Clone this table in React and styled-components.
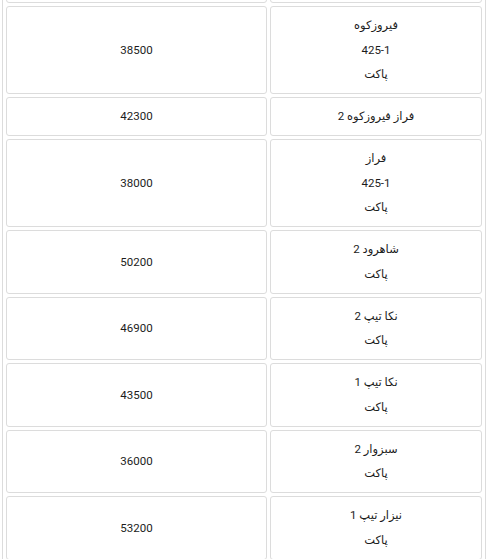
import React from "react";
import styled, { createGlobalStyle } from "styled-components";

const GlobalStyle = createGlobalStyle`
  html, body {
    margin: 0;
    padding: 0;
    background: #fff;
  }
  body {
    width: 487px;
    height: 559px;
    overflow: hidden;
    font-family: Roboto, "DejaVu Sans", sans-serif;
  }
`;

const Page = styled.div`
  padding-left: 2px;
`;

const PriceTable = styled.table`
  width: 484px;
  margin-top: -40px;
  table-layout: fixed;
  border-collapse: separate;
  border-spacing: 3px;
  border: 1px solid #dcdcdc;
  direction: rtl;
`;

const Cell = styled.td`
  box-sizing: border-box;
  width: ${({ $wide }) => ($wide ? "261px" : "212px")};
  height: ${({ $h }) => ($h ? `${$h}px` : "auto")};
  padding: 6.25px 6px;
  border: 1px solid #dcdcdc;
  border-radius: 3px;
  text-align: center;
  vertical-align: middle;
  font-size: 11.5px;
  line-height: 24.5px;
  color: #1c1c1c;
`;

const Line = styled.div`
  white-space: nowrap;
`;

const rows = [
  { name: ["فیروزکوه", "425-1", "پاکت"], price: "38500" },
  { name: ["فراز فیروزکوه 2"], price: "42300" },
  { name: ["فراز", "425-1", "پاکت"], price: "38000" },
  { name: ["شاهرود 2", "پاکت"], price: "50200" },
  { name: ["نکا تیپ 2", "پاکت"], price: "46900" },
  { name: ["نکا تیپ 1", "پاکت"], price: "43500" },
  { name: ["سبزوار 2", "پاکت"], price: "36000" },
  { name: ["نیزار تیپ 1", "پاکت"], price: "53200" },
];

export default function App() {
  return (
    <>
      <GlobalStyle />
      <Page>
        <PriceTable>
          <tbody>
            {/* row above the visible part, only its bottom edge shows */}
            <tr>
              <Cell $h={39} />
              <Cell $wide $h={39} />
            </tr>
            {rows.map((row, i) => (
              <tr key={i}>
                <Cell>
                  {row.name.map((line, j) => (
                    <Line key={j}>{line}</Line>
                  ))}
                </Cell>
                <Cell $wide>{row.price}</Cell>
              </tr>
            ))}
          </tbody>
        </PriceTable>
      </Page>
    </>
  );
}
